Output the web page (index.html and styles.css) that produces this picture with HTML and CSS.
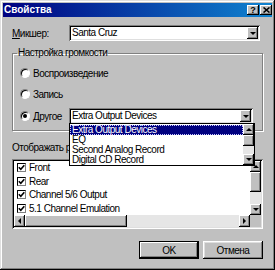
FILE: index.html
```html
<!DOCTYPE html>
<html lang="ru">
<head>
    <meta charset="UTF-8">
    <title>Свойства</title>
    <link rel="stylesheet" href="styles.css">
</head>
<body>
    <div class="window">
        <div class="titlebar">
            <span class="title">Свойства</span>
            <div class="title-buttons">
                <span class="tbtn">?</span>
                <span class="tbtn">
                    <svg width="7" height="6" viewBox="0 0 7 6"><path d="M0.5 0.5 L6.5 5.5 M6.5 0.5 L0.5 5.5" stroke="#000" stroke-width="1.6"/></svg>
                </span>
            </div>
        </div>

        <div class="content">
            <div class="mixer-row">
                <label class="mixer-label"><u>М</u>икшер:</label>
                <div class="combo combo-mixer">
                    <span class="combo-text">Santa Cruz</span>
                    <span class="drop-btn"><span class="arrow-down"></span></span>
                </div>
            </div>

            <fieldset class="group">
                <legend>Настройка громкости</legend>
                <div class="radio-row">
                    <span class="radio"></span>
                    <span>Воспроизведение</span>
                </div>
                <div class="radio-row">
                    <span class="radio"></span>
                    <span>Запись</span>
                </div>
                <div class="radio-row other">
                    <span class="radio checked"></span>
                    <span class="other-label">Другое</span>
                    <div class="combo combo-other">
                        <span class="combo-text">Extra Output Devices</span>
                        <span class="drop-btn"><span class="arrow-down"></span></span>

                        <div class="dropdown">
                            <div class="dd-items">
                                <div class="dd-item selected">Extra Output Devices</div>
                                <div class="dd-item">EQ</div>
                                <div class="dd-item">Second Analog Record</div>
                                <div class="dd-item">Digital CD Record</div>
                            </div>
                            <div class="vscroll">
                                <span class="sb-btn"><span class="arrow-up"></span></span>
                                <span class="sb-thumb dd-thumb"></span>
                                <span class="sb-track"></span>
                                <span class="sb-btn"><span class="arrow-down"></span></span>
                            </div>
                        </div>
                    </div>
                </div>
            </fieldset>

            <div class="list-label">Отображать регуляторы громкости:</div>

            <div class="listbox">
                <div class="list-main">
                    <div class="list-rows">
                        <div class="check-row"><span class="checkbox"><svg width="7" height="7" viewBox="0 0 7 7"><path d="M0.8 3.2 L2.8 5.3 L6.3 1.2" fill="none" stroke="#000" stroke-width="1.6"/></svg></span>Front</div>
                        <div class="check-row"><span class="checkbox"><svg width="7" height="7" viewBox="0 0 7 7"><path d="M0.8 3.2 L2.8 5.3 L6.3 1.2" fill="none" stroke="#000" stroke-width="1.6"/></svg></span>Rear</div>
                        <div class="check-row"><span class="checkbox"><svg width="7" height="7" viewBox="0 0 7 7"><path d="M0.8 3.2 L2.8 5.3 L6.3 1.2" fill="none" stroke="#000" stroke-width="1.6"/></svg></span>Channel 5/6 Output</div>
                        <div class="check-row"><span class="checkbox"><svg width="7" height="7" viewBox="0 0 7 7"><path d="M0.8 3.2 L2.8 5.3 L6.3 1.2" fill="none" stroke="#000" stroke-width="1.6"/></svg></span>5.1 Channel Emulation</div>
                    </div>
                    <div class="vscroll">
                        <span class="sb-btn"><span class="arrow-up"></span></span>
                        <span class="sb-thumb list-vthumb"></span>
                        <span class="sb-track"></span>
                        <span class="sb-btn"><span class="arrow-down"></span></span>
                    </div>
                </div>
                <div class="hscroll">
                    <span class="sb-btn"><span class="arrow-left"></span></span>
                    <span class="sb-thumb list-hthumb"></span>
                    <span class="sb-track"></span>
                    <span class="sb-btn"><span class="arrow-right"></span></span>
                    <span class="sb-corner"></span>
                </div>
            </div>

            <div class="buttons">
                <div class="btn default">OK</div>
                <div class="btn">Отмена</div>
            </div>
        </div>
    </div>
</body>
</html>
```

FILE: styles.css
```css
* {
    margin: 0;
    padding: 0;
    box-sizing: border-box;
}

body {
    background: #c0c0c0;
    color: #000;
    font-family: "Liberation Sans", Arial, sans-serif;
    font-size: 10px;
    letter-spacing: -0.5px;
    overflow: hidden;
}

.window {
    width: 275px;
    height: 270px;
    padding: 3px;
    background: #c0c0c0;
    box-shadow: inset -1px -1px #000, inset 1px 1px #dfdfdf, inset -2px -2px #808080, inset 2px 2px #fff;
}

.titlebar {
    height: 14px;
    display: flex;
    align-items: center;
    justify-content: space-between;
    padding: 0 0 0 1px;
    background: linear-gradient(90deg, #000080, #1084d0);
    color: #fff;
}

.title {
    font-size: 10px;
    font-weight: bold;
    letter-spacing: 0;
    line-height: 14px;
}

.title-buttons {
    display: flex;
    gap: 1px;
}

.tbtn {
    width: 12px;
    height: 10px;
    display: flex;
    align-items: center;
    justify-content: center;
    background: #c0c0c0;
    color: #000;
    font-size: 9px;
    font-weight: bold;
    letter-spacing: 0;
    box-shadow: inset -1px -1px #000, inset 1px 1px #fff, inset -2px -2px #808080;
}

.content {
    padding: 8px 9px 0;
}

/* mixer row */
.mixer-row {
    display: flex;
    align-items: center;
    height: 16px;
}

.mixer-label {
    width: 57px;
}

.combo {
    position: relative;
    display: flex;
    align-items: center;
    height: 16px;
    padding: 2px;
    background: #fff;
    box-shadow: inset 1px 1px #808080, inset -1px -1px #fff, inset 2px 2px #000, inset -2px -2px #dfdfdf;
}

.combo-mixer {
    width: 191px;
}

.combo-other {
    width: 184px;
}

.combo-text {
    flex: 1;
    padding-left: 1px;
    line-height: 12px;
    white-space: nowrap;
}

.drop-btn,
.sb-btn {
    display: flex;
    align-items: center;
    justify-content: center;
    background: #c0c0c0;
    box-shadow: inset -1px -1px #000, inset 1px 1px #fff, inset -2px -2px #808080;
}

.drop-btn {
    width: 11px;
    height: 12px;
}

.arrow-down,
.arrow-up,
.arrow-left,
.arrow-right {
    width: 0;
    height: 0;
}

.arrow-down {
    border-left: 3px solid transparent;
    border-right: 3px solid transparent;
    border-top: 3px solid #000;
}

.arrow-up {
    border-left: 3px solid transparent;
    border-right: 3px solid transparent;
    border-bottom: 3px solid #000;
}

.arrow-left {
    border-top: 3px solid transparent;
    border-bottom: 3px solid transparent;
    border-right: 3px solid #000;
}

.arrow-right {
    border-top: 3px solid transparent;
    border-bottom: 3px solid transparent;
    border-left: 3px solid #000;
}

/* volume group */
.group {
    margin-top: 6px;
    padding: 6px 9px 6px 4px;
    border: 1px solid #808080;
    box-shadow: inset 1px 1px #fff, 1px 1px #fff;
}

.group legend {
    padding: 0 1px;
    line-height: 12px;
}

.radio-row {
    display: flex;
    align-items: center;
    height: 16px;
    padding-left: 3px;
}

.radio-row + .radio-row {
    margin-top: 5px;
}

.radio-row.other {
    margin-top: 6px;
}

.radio {
    position: relative;
    width: 10px;
    height: 10px;
    margin-right: 3px;
    border-radius: 50%;
    border: 1px solid;
    border-color: #808080 #fff #fff #808080;
    background: #fff;
    box-shadow: inset 1px 1px #000;
}

.radio.checked::after {
    content: "";
    position: absolute;
    left: 2px;
    top: 2px;
    width: 4px;
    height: 4px;
    border-radius: 50%;
    background: #000;
}

.other-label {
    width: 36px;
}

/* open list of the combo */
.dropdown {
    position: absolute;
    top: calc(100% - 1px);
    left: 0;
    z-index: 1;
    width: 186px;
    height: 43px;
    display: flex;
    border: 1px solid #000;
    background: #fff;
}

.dd-items {
    flex: 1;
    padding-top: 1px;
}

.dd-item {
    height: 10px;
    line-height: 10px;
    padding-left: 2px;
    white-space: nowrap;
}

.dd-item.selected {
    background: #000080;
    color: #fff;
    outline: 1px dotted #c8c8ff;
    outline-offset: -1px;
}

.vscroll {
    width: 11px;
    display: flex;
    flex-direction: column;
}

.vscroll .sb-btn {
    height: 11px;
}

.sb-thumb {
    background: #c0c0c0;
    box-shadow: inset -1px -1px #000, inset 1px 1px #fff, inset -2px -2px #808080;
}

.dd-thumb {
    height: 11px;
}

.sb-track {
    flex: 1;
    background: #e6e6e6;
}

/* list of controls */
.list-label {
    margin-top: 11px;
    line-height: 12px;
    white-space: nowrap;
}

.listbox {
    margin-top: 5px;
    height: 70px;
    padding: 2px;
    background: #fff;
    box-shadow: inset 1px 1px #808080, inset -1px -1px #fff, inset 2px 2px #000, inset -2px -2px #dfdfdf;
}

.list-main {
    display: flex;
    height: 54px;
}

.list-rows {
    flex: 1;
    padding-left: 3px;
}

.check-row {
    display: flex;
    align-items: center;
    height: 13.5px;
    white-space: nowrap;
}

.checkbox {
    width: 9px;
    height: 9px;
    margin-right: 3px;
    display: flex;
    align-items: center;
    justify-content: center;
    border: 1px solid;
    border-color: #000 #808080 #808080 #000;
    background: #fff;
}

.list-vthumb {
    height: 20px;
}

.hscroll {
    display: flex;
    height: 12px;
}

.hscroll .sb-btn {
    width: 11px;
}

.list-hthumb {
    width: 102px;
}

.sb-corner {
    width: 11px;
    background: #c0c0c0;
}

/* dialog buttons */
.buttons {
    display: flex;
    justify-content: flex-end;
    gap: 4px;
    margin-top: 12px;
}

.btn {
    width: 60px;
    height: 18px;
    display: flex;
    align-items: center;
    justify-content: center;
    background: #c0c0c0;
    box-shadow: inset -1px -1px #000, inset 1px 1px #fff, inset -2px -2px #808080, inset 2px 2px #dfdfdf;
}

.btn.default {
    box-shadow: inset 0 0 0 1px #000, inset -2px -2px #000, inset 2px 2px #fff, inset -3px -3px #808080;
}
```
